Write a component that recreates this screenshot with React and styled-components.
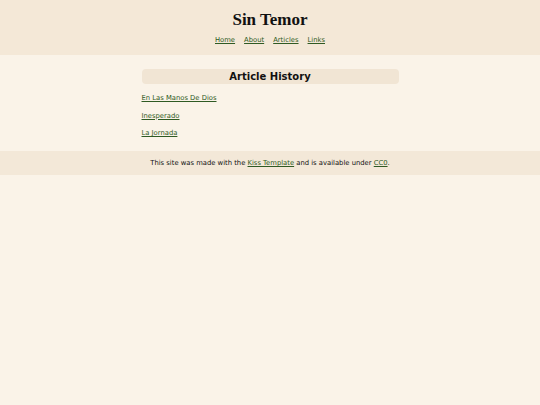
import React from "react";
import styled, { createGlobalStyle } from "styled-components";

const GlobalStyle = createGlobalStyle`
  html, body {
    margin: 0;
    padding: 0;
    background: #faf3e8;
  }
  body {
    font-family: "DejaVu Sans", Verdana, sans-serif;
    color: #111;
  }
`;

const articles = ["En Las Manos De Dios", "Inesperado", "La Jornada"];
const navItems = ["Home", "About", "Articles", "Links"];

export default function App() {
  return (
    <>
      <GlobalStyle />
      <Header>
        <Title>Sin Temor</Title>
        <Nav>
          {navItems.map((item) => (
            <NavLink key={item} href="#">{item}</NavLink>
          ))}
        </Nav>
      </Header>
      <Main>
        <Heading>Article History</Heading>
        <List>
          {articles.map((a) => (
            <li key={a}>
              <ArticleLink href="#">{a}</ArticleLink>
            </li>
          ))}
        </List>
      </Main>
      <Footer>
        This site was made with the <FooterLink href="#">Kiss Template</FooterLink> and is available under <FooterLink href="#">CC0</FooterLink>.
      </Footer>
    </>
  );
}

const Header = styled.header`
  background: #f4e8d7;
  display: flex;
  flex-direction: column;
  align-items: center;
  box-sizing: border-box;
  padding-top: 10px;
  height: 55px;
`;

const Title = styled.h1`
  margin: 0;
  font-family: "Liberation Serif", "Times New Roman", serif;
  font-weight: bold;
  font-size: 17px;
  line-height: 20px;
`;

const Nav = styled.nav`
  display: flex;
  gap: 9px;
  margin-top: 6px;
  line-height: 9px;
`;

const NavLink = styled.a`
  font-size: 6.8px;
  color: #2f5a23;
  text-decoration: underline;
`;

const Main = styled.main`
  width: 257px;
  margin: 0 auto;
  padding: 14px 0 17px;
`;

const Heading = styled.h2`
  margin: 0;
  background: #f1e5d4;
  border-radius: 4px;
  text-align: center;
  font-size: 10px;
  font-weight: bold;
  line-height: 15px;
  padding: 0;
`;

const List = styled.ul`
  list-style: none;
  margin: 6px 0 0;
  padding: 0;
  display: flex;
  flex-direction: column;
  gap: 8.5px;

  li {
    line-height: 9px;
    height: 9px;
  }
`;

const ArticleLink = styled.a`
  font-size: 6.8px;
  color: #2f5a23;
  text-decoration: underline;
`;

const Footer = styled.footer`
  background: #f3e8d8;
  height: 24px;
  display: flex;
  align-items: center;
  justify-content: center;
  font-size: 6.8px;
  white-space: pre;
`;

const FooterLink = styled.a`
  color: #2f5a23;
  text-decoration: underline;
`;
